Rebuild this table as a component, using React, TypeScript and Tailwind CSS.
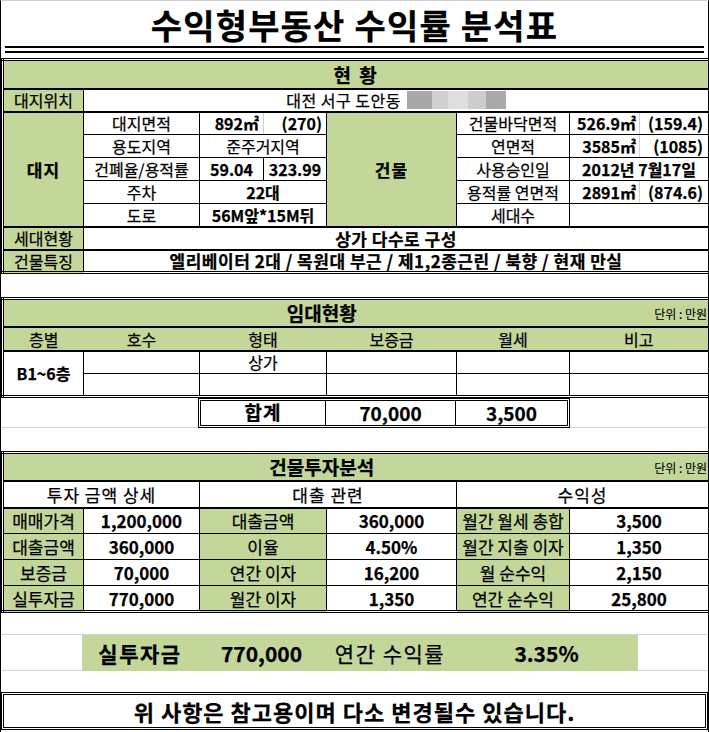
import React from 'react';

const green = 'bg-[#c4d79b]';
const cell = 'border border-black text-center align-middle p-0';

function Cols() {
  return (
    <colgroup>
      <col className="w-[81px]" />
      <col className="w-[116px]" />
      <col className="w-[64px]" />
      <col className="w-[63px]" />
      <col className="w-[130px]" />
      <col className="w-[113px]" />
      <col className="w-[70px]" />
      <col className="w-[70px]" />
    </colgroup>
  );
}

const mosaic = ['bg-[#a8a8a8] w-[25px]', 'bg-[#cfcfcf] w-[16px]', 'bg-[#dedede] w-[20px]', 'bg-[#cdcdcd] w-[18px]', 'bg-[#aaaaaa] w-[20px]'];

export default function App() {
  return (
    <div className="w-[709px] h-[732px] overflow-hidden bg-white text-black border-x border-black border-t border-t-[#d0d0d0] leading-none font-['Noto_Sans_CJK_KR',sans-serif] [-webkit-text-stroke:0.25px_#000]">
      {/* title */}
      <h1 className="h-[45px] pt-[3px] text-center text-[34px] leading-[42px] font-bold tracking-[1.2px]">수익형부동산 수익률 분석표</h1>
      <div className="mx-[4px] h-[7px] border-t-2 border-b-2 border-black" />

      {/* 현황 */}
      <table className="mt-[5px] w-full table-fixed border-collapse border-[3px] border-double border-black text-[16px]">
        <Cols />
        <tbody>
          <tr className="h-[29px]">
            <td colSpan={8} className={`${green} border-b-2 border-black text-center font-bold text-[19px] tracking-[2px]`}>현 황</td>
          </tr>
          <tr className="h-[23px]">
            <td className={`${cell} ${green} border-b-2`}>대지위치</td>
            <td colSpan={7} className={`${cell} border-b-2`}>
              <span className="inline-flex items-center gap-[6px] tracking-[0.5px]">
                대전 서구 도안동
                <span className="inline-flex h-[18px]">
                  {mosaic.map((m, i) => <span key={i} className={`h-full ${m}`} />)}
                </span>
              </span>
            </td>
          </tr>
          <tr className="h-[23px]">
            <td rowSpan={5} className={`${cell} ${green} font-bold text-[17px] tracking-[1px] border-b-2`}>대지</td>
            <td className={cell}>대지면적</td>
            <td className={`${cell} border-r-[#d0d0d0] font-bold text-right pr-[4px]`}>892㎡</td>
            <td className={`${cell} font-bold text-right pr-[4px]`}>(270)</td>
            <td rowSpan={5} className={`${cell} ${green} font-bold text-[17px] tracking-[1px] border-b-2`}>건물</td>
            <td className={cell}>건물바닥면적</td>
            <td className={`${cell} border-r-[#d0d0d0] font-bold text-right pr-[3px]`}>526.9㎡</td>
            <td className={`${cell} font-bold text-right pr-[5px]`}>(159.4)</td>
          </tr>
          <tr className="h-[23px]">
            <td className={cell}>용도지역</td>
            <td colSpan={2} className={cell}>준주거지역</td>
            <td className={cell}>연면적</td>
            <td className={`${cell} border-r-[#d0d0d0] font-bold text-right pr-[3px]`}>3585㎡</td>
            <td className={`${cell} font-bold text-right pr-[5px]`}>(1085)</td>
          </tr>
          <tr className="h-[23px]">
            <td className={cell}>건폐율/용적률</td>
            <td className={`${cell} font-bold`}>59.04</td>
            <td className={`${cell} font-bold`}>323.99</td>
            <td className={cell}>사용승인일</td>
            <td colSpan={2} className={`${cell} font-bold`}>2012년 7월17일</td>
          </tr>
          <tr className="h-[23px]">
            <td className={cell}>주차</td>
            <td colSpan={2} className={`${cell} font-bold`}>22대</td>
            <td className={cell}>용적률 연면적</td>
            <td className={`${cell} border-r-[#d0d0d0] font-bold text-right pr-[3px]`}>2891㎡</td>
            <td className={`${cell} font-bold text-right pr-[5px]`}>(874.6)</td>
          </tr>
          <tr className="h-[23px]">
            <td className={`${cell} border-b-2`}>도로</td>
            <td colSpan={2} className={`${cell} border-b-2 font-bold`}>56M앞*15M뒤</td>
            <td className={`${cell} border-b-2`}>세대수</td>
            <td colSpan={2} className={`${cell} border-b-2`}></td>
          </tr>
          <tr className="h-[23px]">
            <td className={`${cell} ${green} border-b-2`}>세대현황</td>
            <td colSpan={7} className={`${cell} border-b-2 font-bold text-[17px] tracking-[0.5px]`}>상가 다수로 구성</td>
          </tr>
          <tr className="h-[23px]">
            <td className={`${cell} ${green}`}>건물특징</td>
            <td colSpan={7} className={`${cell} font-bold text-[17px] tracking-[0.5px]`}>엘리베이터 2대 / 목원대 부근 / 제1,2종근린 / 북향 / 현재 만실</td>
          </tr>
        </tbody>
      </table>

      <div className="h-[23px]" />

      {/* 임대현황 */}
      <table className="w-full table-fixed border-collapse border-[3px] border-double border-black text-[16px]">
        <Cols />
        <tbody>
          <tr className={`h-[28px] ${green}`}>
            <td colSpan={7} className="border-b-2 border-black text-center font-bold text-[19px]">임대현황</td>
            <td className="border-b-2 border-black text-right align-bottom pb-[6px] pr-[1px] text-[12px] [-webkit-text-stroke:0.1px_#000]">단위 : 만원</td>
          </tr>
          <tr className={`h-[24px] ${green}`}>
            <td className="border-b-2 border-black text-center">층별</td>
            <td className="border-b-2 border-black text-center">호수</td>
            <td colSpan={2} className="border-b-2 border-black text-center">형태</td>
            <td className="border-b-2 border-black text-center">보증금</td>
            <td className="border-b-2 border-black text-center">월세</td>
            <td colSpan={2} className="border-b-2 border-black text-center">비고</td>
          </tr>
          <tr className="h-[23px]">
            <td rowSpan={2} className={`${cell} font-bold`}>B1~6층</td>
            <td className={cell}></td>
            <td colSpan={2} className={`${cell} align-top pt-[2px]`}>상가</td>
            <td className={cell}></td>
            <td className={cell}></td>
            <td colSpan={2} className={cell}></td>
          </tr>
          <tr className="h-[23px]">
            <td className={cell}></td>
            <td colSpan={2} className={cell}></td>
            <td className={cell}></td>
            <td className={cell}></td>
            <td colSpan={2} className={cell}></td>
          </tr>
        </tbody>
      </table>

      {/* 합계 */}
      <div className="flex h-[30px] text-[19px] font-bold">
        <div className="w-[197px] border-b border-[#d4d4d4]" />
        <div className="w-[372px] flex border-[3px] border-double border-black">
          <div className="w-[125px] flex items-center justify-center pb-[4px] border-r border-black tracking-[1px]">합계</div>
          <div className="w-[130px] flex items-center justify-center pb-[2px] border-r border-black">70,000</div>
          <div className="flex-1 flex items-center justify-center pb-[2px]">3,500</div>
        </div>
        <div className="flex-1 border-b border-[#d4d4d4]" />
      </div>

      <div className="h-[23px]" />

      {/* 건물투자분석 */}
      <table className="w-full table-fixed border-collapse border-[3px] border-double border-black text-[17px]">
        <Cols />
        <tbody>
          <tr className={`h-[28px] ${green}`}>
            <td colSpan={7} className="border-b-2 border-black text-center font-bold text-[19px]">건물투자분석</td>
            <td className="border-b-2 border-black text-right align-bottom pb-[6px] pr-[1px] text-[12px] [-webkit-text-stroke:0.1px_#000]">단위 : 만원</td>
          </tr>
          <tr className="h-[27px] tracking-[1px]">
            <td colSpan={2} className={`${cell} border-b-2`}>투자 금액 상세</td>
            <td colSpan={3} className={`${cell} border-b-2`}>대출 관련</td>
            <td colSpan={3} className={`${cell} border-b-2`}>수익성</td>
          </tr>
          {[
            ['매매가격', '1,200,000', '대출금액', '360,000', '월간 월세 총합', '3,500'],
            ['대출금액', '360,000', '이율', '4.50%', '월간 지출 이자', '1,350'],
            ['보증금', '70,000', '연간 이자', '16,200', '월 순수익', '2,150'],
            ['실투자금', '770,000', '월간 이자', '1,350', '연간 순수익', '25,800'],
          ].map((r, i) => (
            <tr key={i} className="h-[26px]">
              <td className={`${cell} ${green}`}>{r[0]}</td>
              <td className={`${cell} font-bold`}>{r[1]}</td>
              <td colSpan={2} className={`${cell} ${green}`}>{r[2]}</td>
              <td className={`${cell} font-bold`}>{r[3]}</td>
              <td className={`${cell} ${green} whitespace-nowrap`}>{r[4]}</td>
              <td colSpan={2} className={`${cell} font-bold`}>{r[5]}</td>
            </tr>
          ))}
        </tbody>
      </table>

      <div className="h-[22px] border-b border-[#d4d4d4]" />

      {/* 요약 */}
      <div className="flex h-[36px] text-[21px]">
        <div className="w-[81px] border-b border-[#d4d4d4]" />
        <div className={`w-[556px] flex items-center ${green}`}>
          <div className="w-[116px] text-center font-bold tracking-[1.5px]">실투자금</div>
          <div className="w-[127px] text-center font-bold">770,000</div>
          <div className="w-[130px] text-center tracking-[1.5px]">연간 수익률</div>
          <div className="flex-1 text-center font-bold">3.35%</div>
        </div>
        <div className="flex-1 border-b border-[#d4d4d4]" />
      </div>

      <div className="h-[21px]" />

      <div className="h-[38px] flex items-center justify-center border-[3px] border-double border-black text-[22px] font-bold tracking-[1px]">
        위 사항은 참고용이며 다소 변경될수 있습니다.
      </div>
    </div>
  );
}
